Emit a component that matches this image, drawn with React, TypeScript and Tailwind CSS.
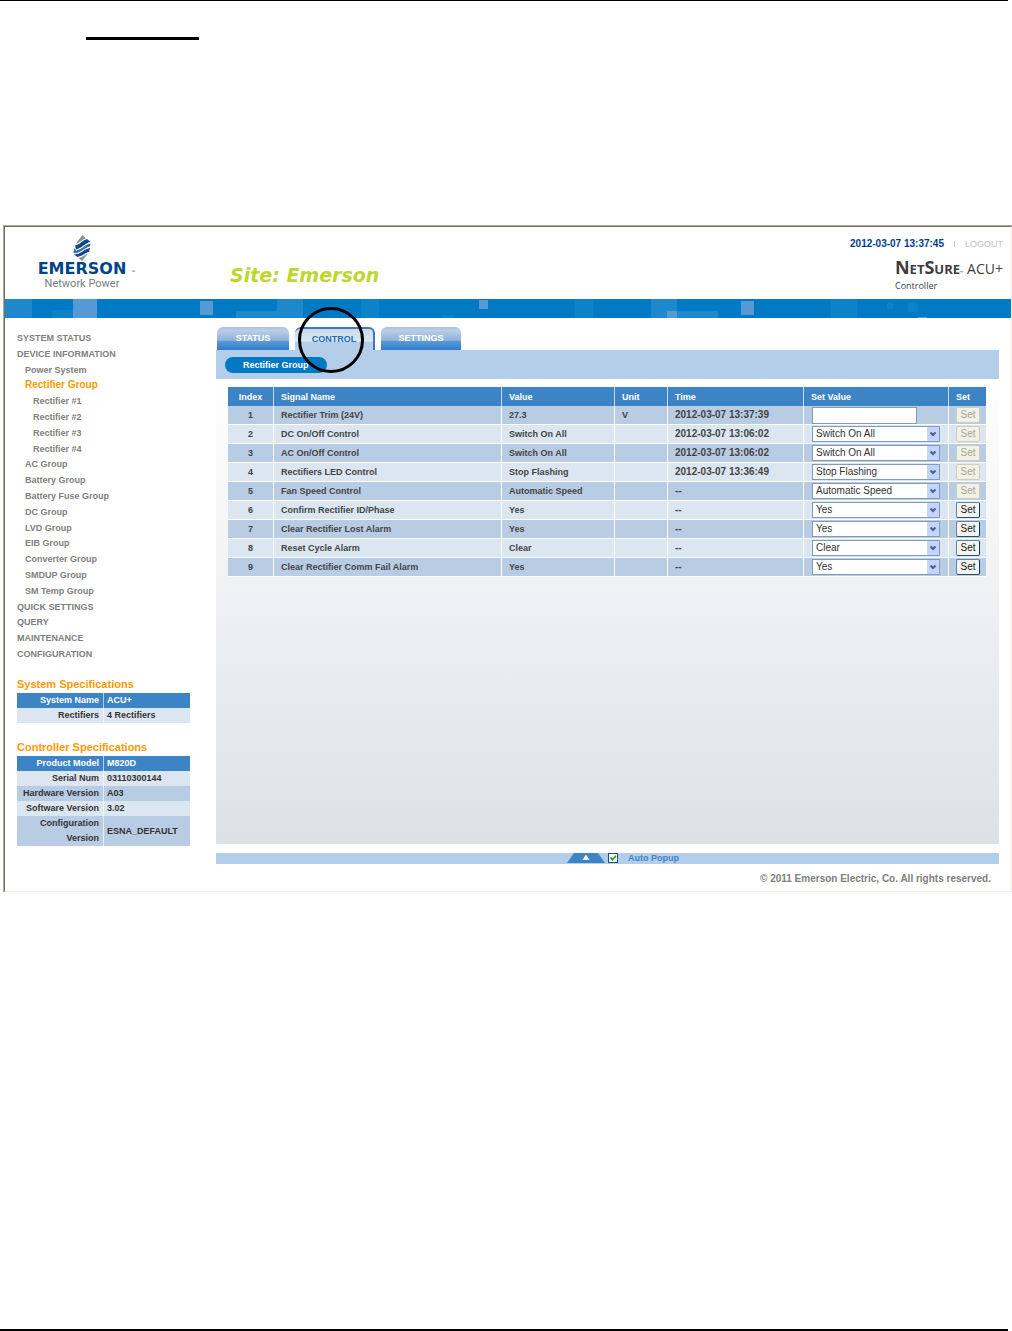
import React from 'react';
import clsx from 'clsx';

interface Signal {
  name: string;
  value: string;
  unit?: string;
  time: string;
  input?: boolean;
  disabled?: boolean;
}

const NAV = [
  { label: 'SYSTEM STATUS', level: 0 },
  { label: 'DEVICE INFORMATION', level: 0 },
  { label: 'Power System', level: 1 },
  { label: 'Rectifier Group', level: 1, active: true },
  { label: 'Rectifier #1', level: 2 },
  { label: 'Rectifier #2', level: 2 },
  { label: 'Rectifier #3', level: 2 },
  { label: 'Rectifier #4', level: 2 },
  { label: 'AC Group', level: 1 },
  { label: 'Battery Group', level: 1 },
  { label: 'Battery Fuse Group', level: 1 },
  { label: 'DC Group', level: 1 },
  { label: 'LVD Group', level: 1 },
  { label: 'EIB Group', level: 1 },
  { label: 'Converter Group', level: 1 },
  { label: 'SMDUP Group', level: 1 },
  { label: 'SM Temp Group', level: 1 },
  { label: 'QUICK SETTINGS', level: 0 },
  { label: 'QUERY', level: 0 },
  { label: 'MAINTENANCE', level: 0 },
  { label: 'CONFIGURATION', level: 0 },
];

const SIGNALS: Signal[] = [
  { name: 'Rectifier Trim (24V)', value: '27.3', unit: 'V', time: '2012-03-07 13:37:39', input: true, disabled: true },
  { name: 'DC On/Off Control', value: 'Switch On All', time: '2012-03-07 13:06:02', disabled: true },
  { name: 'AC On/Off Control', value: 'Switch On All', time: '2012-03-07 13:06:02', disabled: true },
  { name: 'Rectifiers LED Control', value: 'Stop Flashing', time: '2012-03-07 13:36:49', disabled: true },
  { name: 'Fan Speed Control', value: 'Automatic Speed', time: '--', disabled: true },
  { name: 'Confirm Rectifier ID/Phase', value: 'Yes', time: '--' },
  { name: 'Clear Rectifier Lost Alarm', value: 'Yes', time: '--' },
  { name: 'Reset Cycle Alarm', value: 'Clear', time: '--' },
  { name: 'Clear Rectifier Comm Fail Alarm', value: 'Yes', time: '--' },
];

const SYSTEM_SPECS = [
  ['System Name', 'ACU+'],
  ['Rectifiers', '4 Rectifiers'],
];

const CONTROLLER_SPECS = [
  ['Product Model', 'M820D'],
  ['Serial Num', '03110300144'],
  ['Hardware Version', 'A03'],
  ['Software Version', '3.02'],
  ['Configuration Version', 'ESNA_DEFAULT'],
];

const EmersonLogo = () => (
  <div className="flex w-[98px] flex-col items-center">
    <svg width="20" height="26" viewBox="0 0 20 26">
      <path d="M10.5 0 L14 3.5 C10 4.5 8 8 3.5 9 Z" fill="#8d9097" />
      <path d="M3 10.5 C9 9 10 5 15 4 L18.5 7 C13 8 11 13 4 14.5 Z" fill="#0b4c90" />
      <path d="M2.5 13 L4 15.5 C11 14 13 9 18.5 8.5 L18 11.5 C13 12.5 10 17.5 3 18.5 L1.5 17.5 Z" fill="#3b6ba3" />
      <path d="M2 19.5 C9 19 12 14 18 13 L17 17 C13 18 11 21 5.5 22 Z" fill="#0b4c90" />
      <path d="M6.5 23 C11 22 12.5 19.5 16 18.5 L10 26 Z" fill="#8d9097" />
      <path
        d="M3 9.8 C9 8.5 10 4.7 14.5 3.8 M4 15 C11 13.5 13 8.5 18.5 7.7 M2.5 19 C9 18.5 12 13 18 12.2 M6 22.5 C11 21.5 13 18.5 17 17.7"
        stroke="#fff"
        strokeWidth=".8"
        fill="none"
      />
    </svg>
    <div className="font-['DejaVu_Sans'] text-[16px] leading-[16px] font-bold text-[#004488]">EMERSON</div>
    <div className="font-['Roboto'] text-[11px] leading-[13px] text-[#7a7c80]">Network Power</div>
  </div>
);

const Banner = () => (
  <div className="h-[19px] overflow-hidden bg-[#007ac4]">
    <svg width="1007" height="19" className="block max-w-none">
      <g fill="#1d88cb">
        <rect x="0" width="27" height="19" />
        <rect x="231" y="12" width="51" height="7" />
        <rect x="272" width="26" height="19" />
        <rect x="646" width="26" height="19" />
        <rect x="672" y="12" width="41" height="7" />
      </g>
      <g fill="#0c82c8">
        <rect x="47" y="11" width="21" height="8" />
        <rect x="356" width="18" height="19" />
        <rect x="438" y="16" width="10" height="3" />
        <rect x="570" width="18" height="19" />
        <rect x="826" width="26" height="19" />
        <rect x="882" y="4" width="6" height="6" />
        <rect x="903" y="4" width="10" height="9" />
      </g>
      <g fill="#569ad5">
        <rect x="68" width="24" height="19" />
        <rect x="195" y="2" width="13" height="14" />
        <rect x="474" y="1" width="9" height="9" />
        <rect x="662" y="12" width="10" height="7" />
        <rect x="736" y="2" width="13" height="14" />
        <rect x="913" y="18" width="9" height="1" />
      </g>
    </svg>
  </div>
);

const Header = () => (
  <header className="flex h-[72px] justify-between pr-2 pl-7">
    <div className="flex">
      <div className="pt-[8px]">
        <EmersonLogo />
      </div>
      <span className="w-2 pt-[42px] text-[4px] leading-[6px] text-[#004488]">™</span>
      <h1 className="ml-[91px] pt-[36px] font-['DejaVu_Sans'] text-[19px] leading-[24px] font-bold text-[#bdd630] italic">
        Site: Emerson
      </h1>
    </div>
    <div className="flex flex-col items-end pt-[11px]">
      <div className="flex items-center text-[10px] leading-[12px]">
        <span className="font-bold text-[#003d8f]">2012-03-07 13:37:45</span>
        <span className="mx-[10px] h-[6px] w-px bg-[#c8c8c8]" />
        <a href="#logout" className="text-[9px] text-[#c0c0c0]">LOGOUT</a>
      </div>
      <div className="mt-[8px] font-['Open_Sans'] text-[#3d3d3f]">
        <div className="flex items-baseline leading-[18px]">
          <span className="text-[18px] font-bold">N</span>
          <span className="text-[13px] font-bold">ET</span>
          <span className="text-[18px] font-bold">S</span>
          <span className="text-[13px] font-bold">URE</span>
          <span className="text-[4px]">™</span>
          <span className="ml-1 text-[14px]">ACU+</span>
        </div>
        <div className="text-[9px] leading-[8px]">Controller</div>
      </div>
    </div>
  </header>
);

const SpecTable = ({ title, rows }: { title: string; rows: string[][] }) => (
  <section>
    <h2 className="text-[11px] leading-[18px] font-bold text-[#ff9900]">{title}</h2>
    <table className="w-[173px] table-fixed border-separate border-spacing-0 text-[9px] leading-[15px] font-bold text-[#333]">
      <tbody>
        {rows.map(([label, value], i) => (
          <tr
            key={label}
            className={clsx(
              i === 0 && 'bg-[#3d84c6] text-white',
              i > 0 && (i % 2 ? 'bg-[#dce6f1]' : 'bg-[#b8cce4]'),
            )}
          >
            <th scope="row" className="w-[87px] border-r border-white/60 pr-1 text-right">{label}</th>
            <td className="pl-[3px]">{value}</td>
          </tr>
        ))}
      </tbody>
    </table>
  </section>
);

const Sidebar = () => (
  <aside className="w-[211px] shrink-0 pt-[12px] pl-3">
    <nav className="grid h-[332px] auto-rows-fr text-[9px] font-bold text-[#808080]">
      {NAV.map((item) => (
        <a
          key={item.label}
          href="#nav"
          className={clsx(
            'flex items-center leading-[12px]',
            item.level === 1 && 'pl-2',
            item.level === 2 && 'pl-4',
            item.active && 'text-[10px] text-[#ff9900]',
          )}
        >
          {item.label}
        </a>
      ))}
    </nav>
    <div className="mt-[13px] flex flex-col gap-[15px]">
      <SpecTable title="System Specifications" rows={SYSTEM_SPECS} />
      <SpecTable title="Controller Specifications" rows={CONTROLLER_SPECS} />
    </div>
  </aside>
);

const Tabs = () => (
  <div className="flex h-[23px] gap-[6px] pl-px text-[9px] font-bold">
    <button className="w-[72px] rounded-t-md bg-[linear-gradient(#a9c3e0,#b9cee6_15%,#8fb3dc_58%,#5c9ad6_62%,#2c7dcb)] text-white">
      STATUS
    </button>
    <div className="relative">
      <button className="h-full w-[80px] rounded-t-md border-t-2 border-r-2 border-[#4378b8] bg-[linear-gradient(#c6d9ee,#dde7f3_58%,#b4cde9_62%)] text-[#1b70b8]">
        CONTROL
      </button>
      <span className="pointer-events-none absolute -top-[20px] left-[3px] z-10 size-[66px] rounded-full border-[3px] border-black" />
    </div>
    <button className="w-[80px] rounded-t-md bg-[linear-gradient(#a9c3e0,#b9cee6_15%,#8fb3dc_58%,#5c9ad6_62%,#2c7dcb)] text-white">
      SETTINGS
    </button>
  </div>
);

const SetValue = ({ signal }: { signal: Signal }) => {
  if (signal.input) {
    return (
      <input
        type="text"
        aria-label={signal.name}
        className="block h-[17px] w-[105px] border border-[#7f9db9] bg-white px-1 text-[10px]"
      />
    );
  }
  return (
    <div className="relative w-[128px]">
      <select
        aria-label={signal.name}
        className="block h-[16px] w-full appearance-none border border-[#7f9db9] bg-white pl-[3px] text-[10px] leading-[14px] font-normal text-[#333]"
      >
        <option>{signal.value}</option>
      </select>
      <svg className="pointer-events-none absolute top-px right-px" width="12" height="14" viewBox="0 0 12 14">
        <rect width="12" height="14" rx="1" fill="#c4d4fb" />
        <path d="M3.5 5.5 L6 8 L8.5 5.5" fill="none" stroke="#4d6185" strokeWidth="2" />
      </svg>
    </div>
  );
};

const SignalTable = () => (
  <table className="w-full table-fixed border-separate border-spacing-0 text-left text-[9px] leading-[12px] font-bold text-[#444] [&_td]:border-b [&_td]:border-white [&_td:not(:last-child)]:border-r [&_th]:border-white/70 [&_th:not(:last-child)]:border-r">
    <thead>
      <tr className="h-[19px] bg-[#3d84c6] text-white">
        <th className="w-[46px] text-center">Index</th>
        <th className="pl-[7px]">Signal Name</th>
        <th className="w-[113px] pl-[7px]">Value</th>
        <th className="w-[53px] pl-[7px]">Unit</th>
        <th className="w-[136px] pl-[7px]">Time</th>
        <th className="w-[145px] pl-[7px]">Set Value</th>
        <th className="w-[37px] pl-[7px]">Set</th>
      </tr>
    </thead>
    <tbody>
      {SIGNALS.map((signal, i) => (
        <tr key={signal.name} className={clsx('h-[19px]', i % 2 ? 'bg-[#dce6f1]' : 'bg-[#b8cce4]')}>
          <td className="text-center">{i + 1}</td>
          <td className="pl-[7px]">{signal.name}</td>
          <td className="pl-[7px]">{signal.value}</td>
          <td className="pl-[7px]">{signal.unit}</td>
          <td className="pl-[7px] text-[10px]">{signal.time}</td>
          <td className="pl-2">
            <SetValue signal={signal} />
          </td>
          <td className="pl-[7px]">
            <button
              disabled={signal.disabled}
              className={clsx(
                'block h-[16px] w-[24px] rounded-[2px] border text-[10px] leading-[12px] font-normal',
                signal.disabled
                  ? 'border-[#cfccba] bg-[#f2f1e6] text-[#a8a694]'
                  : 'border-[#5f86a8] border-r-[#003c74] border-b-[#26507a] bg-[#f4f3ee] text-[#222]',
              )}
            >
              Set
            </button>
          </td>
        </tr>
      ))}
    </tbody>
  </table>
);

const PopupBar = () => (
  <div className="mt-[9px] flex h-[11px] items-start justify-center bg-[#b4cde9]">
    <button aria-label="Expand" className="mr-[3px] ml-[31px]">
      <svg width="38" height="10" viewBox="0 0 38 10" className="block">
        <path d="M7 0 H31 L38 10 H0 Z" fill="#3d84c6" />
        <path d="M19 1.5 L22.5 7 H15.5 Z" fill="#fff" />
      </svg>
    </button>
    <input id="auto-popup" type="checkbox" defaultChecked className="peer sr-only" />
    <label htmlFor="auto-popup" className="flex gap-[10px] text-[9px] leading-[10px] font-bold text-[#3d84c6]">
      <svg width="10" height="10" viewBox="0 0 10 10">
        <rect x=".5" y=".5" width="9" height="9" fill="#fff" stroke="#1c4f80" />
        <path d="M2.5 4.5 L4.5 6.8 L8 2.8" fill="none" stroke="#21a121" strokeWidth="1.6" />
      </svg>
      Auto Popup
    </label>
  </div>
);

export default function App() {
  return (
    <div className="flex min-h-screen flex-col bg-white font-['Liberation_Sans',Arial,sans-serif]">
      <div className="mr-1 h-px bg-black" />
      <div className="mt-[36px] ml-[86px] h-[3px] w-[113px] bg-black" />

      <div className="mt-[185px] ml-[3px] border-t border-l border-[#aca899]">
        <div className="border border-t-[#716f64] border-r-[#f1efe2] border-b-[#f1efe2] border-l-[#716f64]">
          <Header />
          <Banner />
          <div className="flex pr-3">
            <Sidebar />
            <main className="min-w-0 flex-1 pt-[9px]">
              <Tabs />
              <div className="flex h-[29px] items-center bg-[#b4cde9] pl-[9px]">
                <a href="#group" className="rounded-full bg-[#0079c4] px-[18px] text-[9px] leading-[16px] font-bold text-white">
                  Rectifier Group
                </a>
              </div>
              <div className="h-[465px] bg-linear-to-b from-white to-[#dde1e6] pt-2 pr-[13px] pl-3">
                <SignalTable />
              </div>
              <PopupBar />
              <footer className="pt-2 pr-2 pb-[5px] text-right text-[10px] leading-[14px] font-bold text-[#808080]">
                © 2011 Emerson Electric, Co. All rights reserved.
              </footer>
            </main>
          </div>
        </div>
      </div>

      <div className="mt-auto mr-1 h-[2px] bg-black" />
    </div>
  );
}
